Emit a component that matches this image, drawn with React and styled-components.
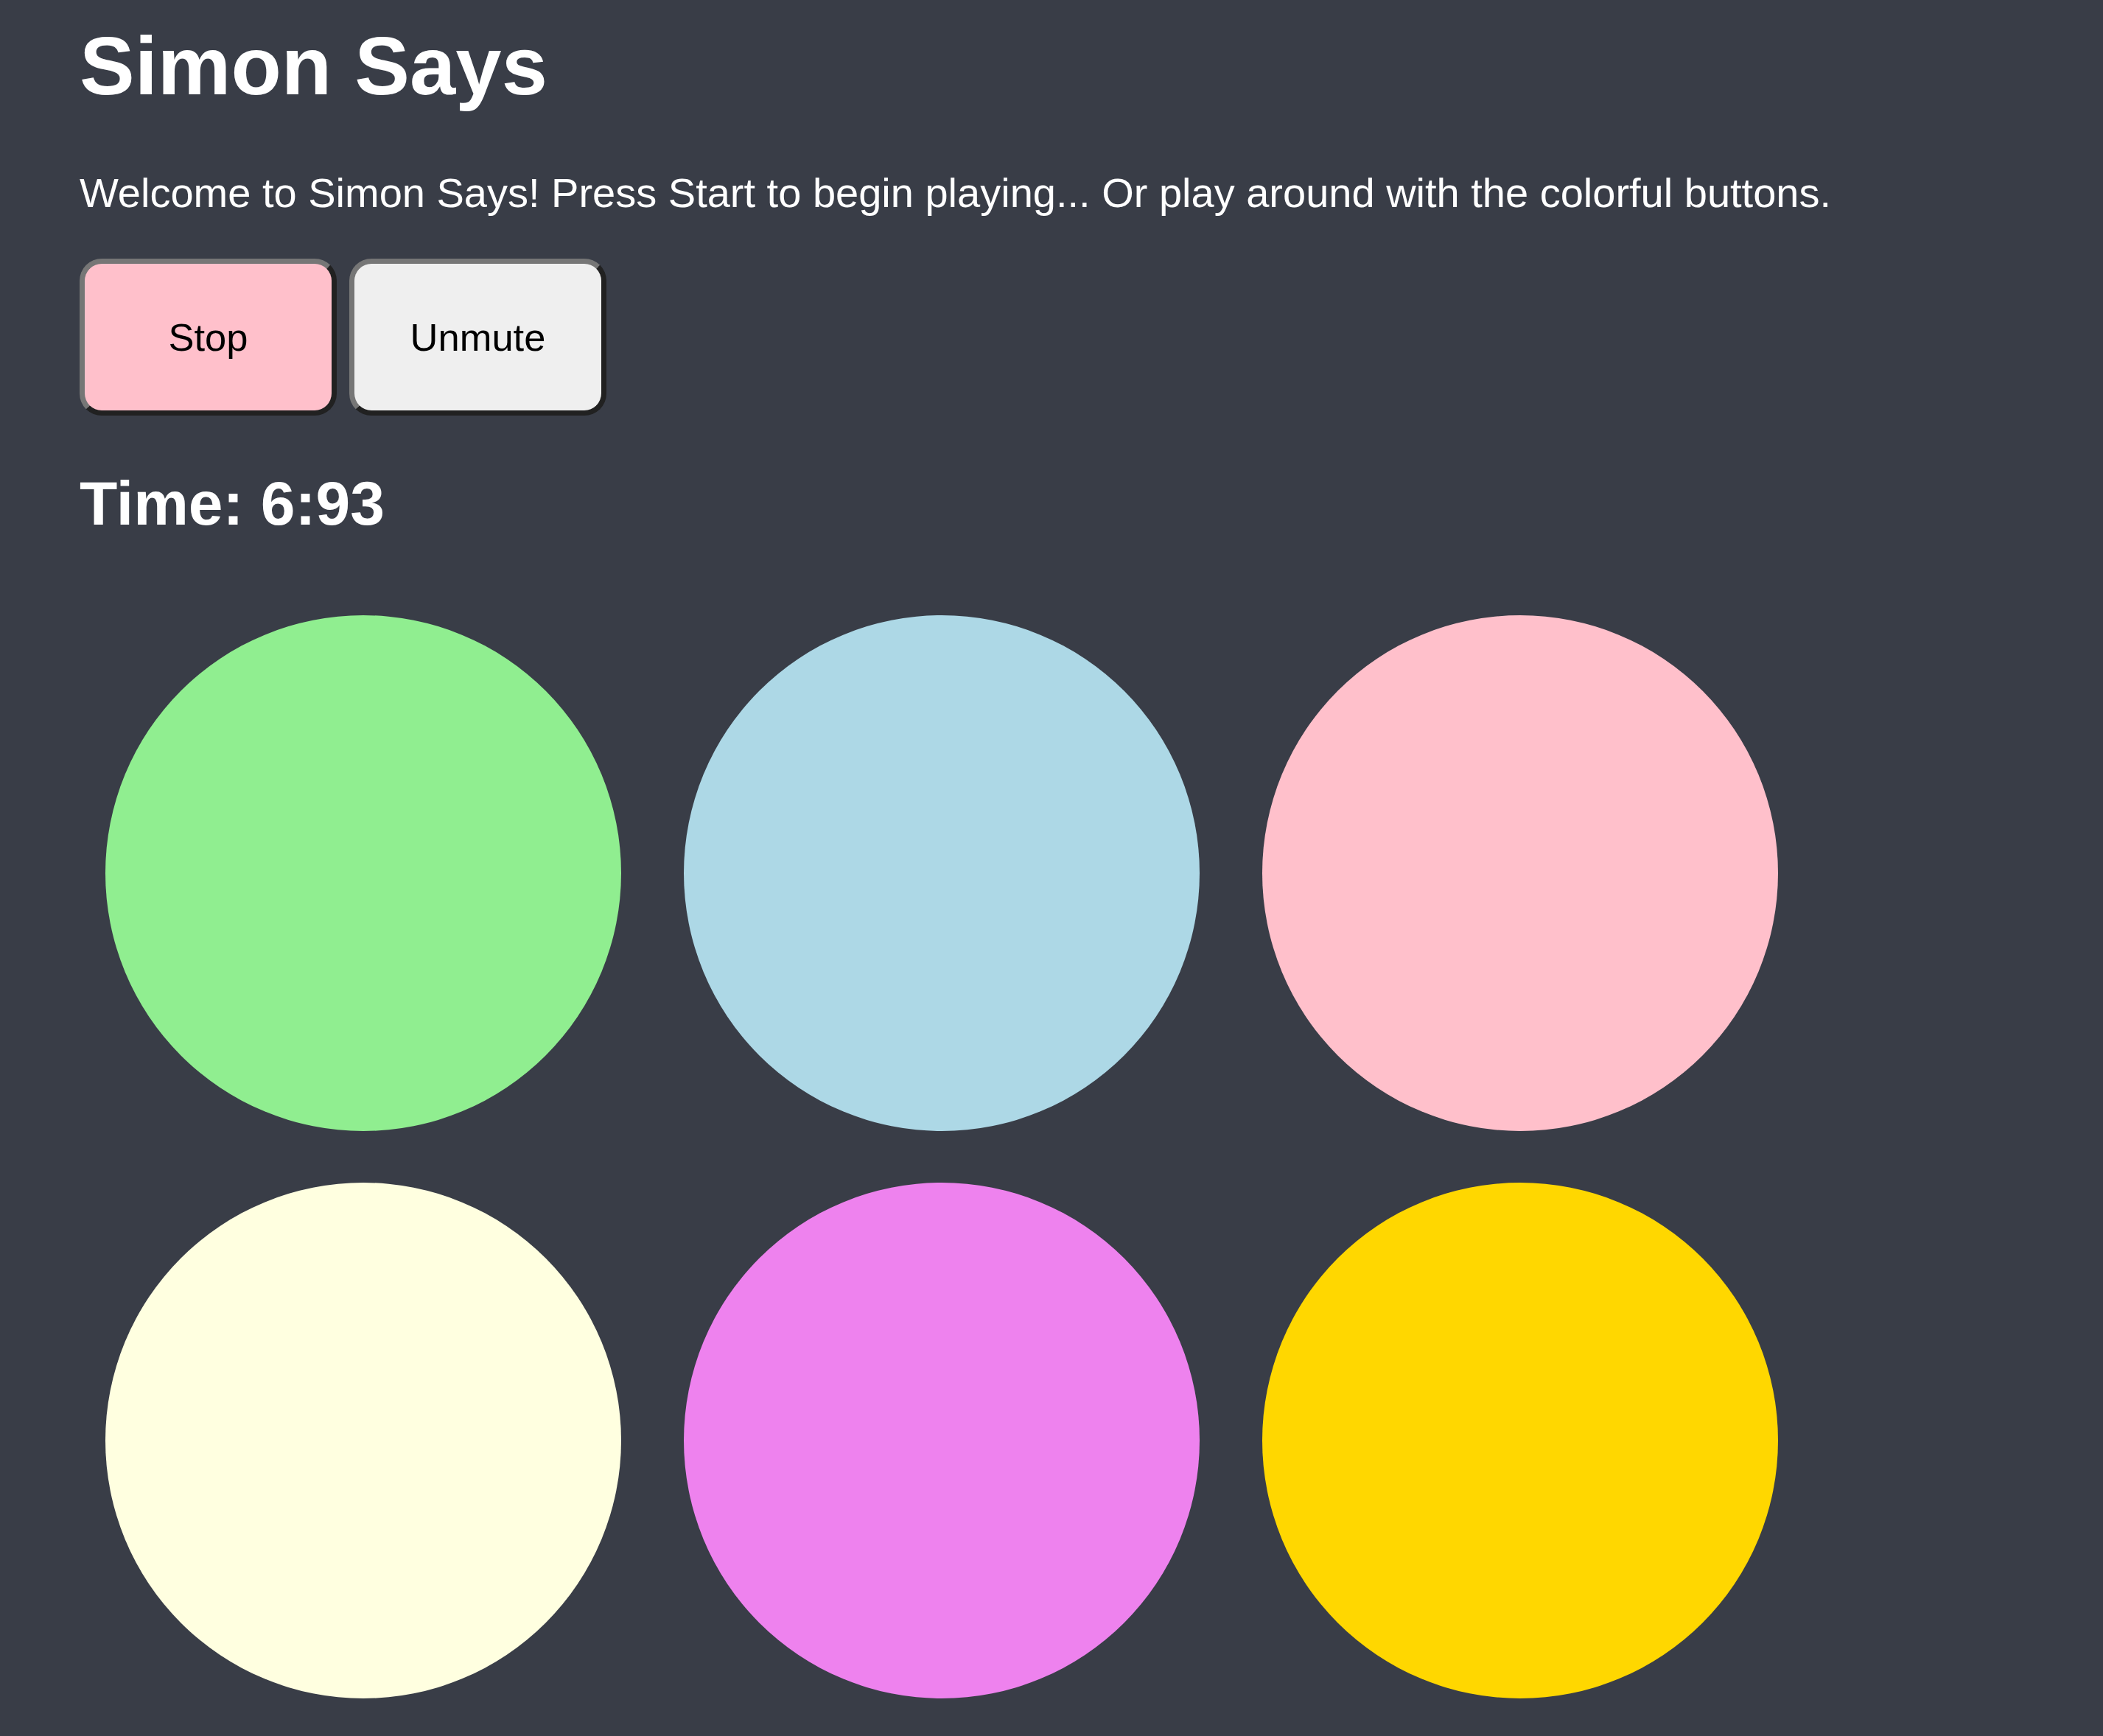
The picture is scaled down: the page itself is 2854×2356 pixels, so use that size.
import React, { useState } from 'react';
import styled, { createGlobalStyle } from 'styled-components';

const GlobalStyle = createGlobalStyle`
  html, body {
    margin: 0;
    padding: 0;
    background-color: #393d47;
  }

  body {
    font-family: "Liberation Sans", Arial, Helvetica, sans-serif;
    color: #ffffff;
  }
`;

const Page = styled.div`
  box-sizing: border-box;
  padding: 26px 0 0 108px;
`;

const Title = styled.h1`
  margin: 0 0 75.6px;
  font-size: 112px;
  line-height: 1.15;
  font-weight: 700;
`;

const Intro = styled.p`
  margin: 0 0 56px;
  font-size: 56px;
  line-height: 1.15;
`;

const Controls = styled.div`
  display: flex;
  gap: 17px;
`;

const ControlButton = styled.button`
  box-sizing: border-box;
  width: 349px;
  height: 213px;
  padding: 0;
  border-width: 7px;
  border-style: solid;
  border-color: #767676 #212121 #212121 #767676;
  border-radius: 30px;
  background-color: ${(p) => p.$bg};
  color: #000000;
  font-family: "Liberation Sans", Arial, Helvetica, sans-serif;
  font-size: 52.5px;
  cursor: pointer;
`;

const Timer = styled.h2`
  margin: 71.6px 0 68px;
  font-size: 84px;
  line-height: 1.15;
  font-weight: 700;
`;

const Board = styled.div`
  display: grid;
  grid-template-columns: repeat(3, 700px);
  column-gap: 85px;
  row-gap: 70px;
  padding: 35px 35px 0;
`;

const Pad = styled.div`
  width: 700px;
  height: 700px;
  border-radius: 50%;
  background-color: ${(p) => p.$color};
  cursor: pointer;
`;

const padColors = ['lightgreen', 'lightblue', 'pink', 'lightyellow', 'violet', 'gold'];

const App = () => {
  const [playing, setPlaying] = useState(true);
  const [muted, setMuted] = useState(true);

  return (
    <Page>
      <GlobalStyle />
      <Title>Simon Says</Title>
      <Intro>
        Welcome to Simon Says! Press Start to begin playing... Or play around with the colorful buttons.
      </Intro>
      <Controls>
        <ControlButton $bg={playing ? 'pink' : '#efefef'} onClick={() => setPlaying(!playing)}>
          {playing ? 'Stop' : 'Start'}
        </ControlButton>
        <ControlButton $bg="#efefef" onClick={() => setMuted(!muted)}>
          {muted ? 'Unmute' : 'Mute'}
        </ControlButton>
      </Controls>
      <Timer>Time: 6:93</Timer>
      <Board>
        {padColors.map((color) => <Pad key={color} $color={color} />)}
      </Board>
    </Page>
  );
};

export default App;
